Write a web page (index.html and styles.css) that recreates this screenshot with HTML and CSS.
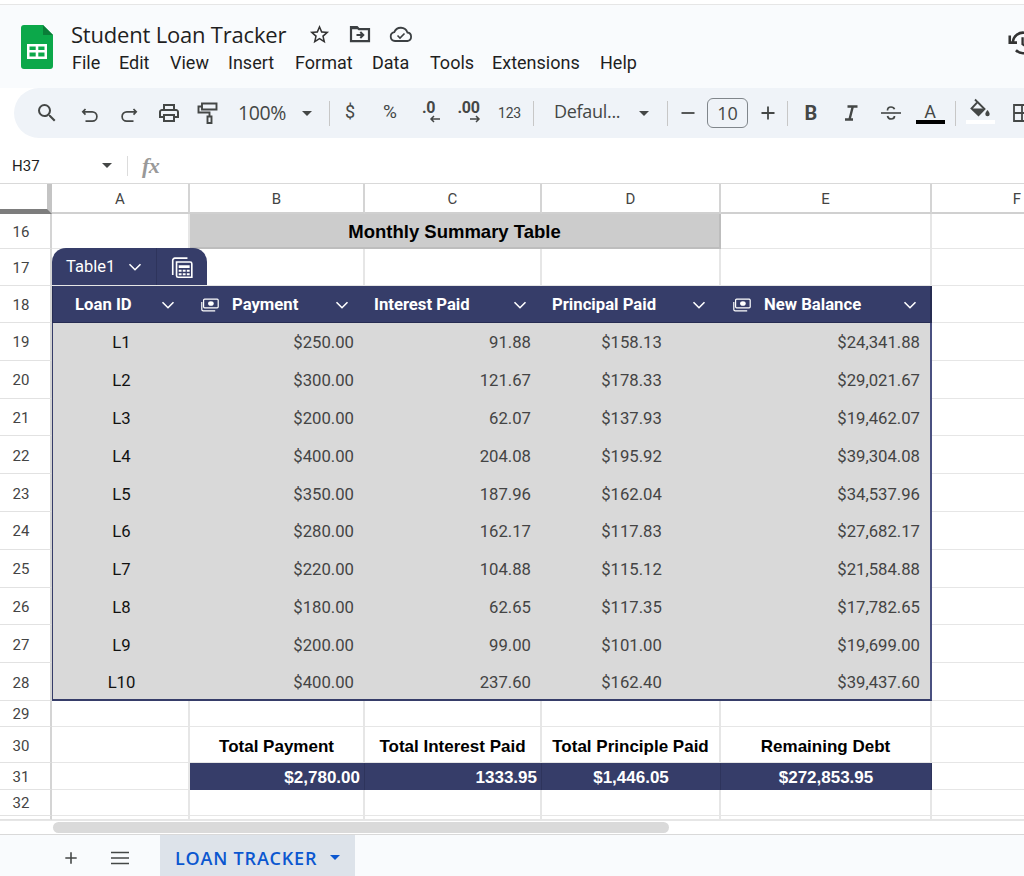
FILE: index.html
```html
<!DOCTYPE html>
<html lang="en">
<head>
<meta charset="utf-8">
<title>Student Loan Tracker</title>
<link rel="stylesheet" href="styles.css">
</head>
<body>
<svg class="defs" width="0" height="0" aria-hidden="true">
  <symbol id="chev" viewBox="0 0 14 14"><path d="M1.500 4.200 7 9.700l5.500-5.500" fill="none" stroke="currentColor" stroke-width="1.600"/></symbol>
  <symbol id="money" viewBox="0 0 18 14"><path d="M3.600 1.200h12.600a1 1 0 0 1 1 1v6.600a1 1 0 0 1-1 1H3.600a1 1 0 0 1-1-1V2.200a1 1 0 0 1 1-1zM.8 4v7.400a1.400 1.400 0 0 0 1.400 1.400h12" fill="none" stroke="currentColor" stroke-width="1.200"/><ellipse cx="9.900" cy="5.500" rx="2.800" ry="2.300" fill="currentColor"/></symbol>
</svg>
<div class="app">
  <header class="top">
    <svg class="logo" viewBox="0 0 32 44" aria-hidden="true"><path d="M3 0h19l10 10v31a3 3 0 0 1-3 3H3a3 3 0 0 1-3-3V3a3 3 0 0 1 3-3z" fill="#0ca84a"/><path d="M22 0l10 10h-10z" fill="#0a7d38"/><path d="M6 19h20v15H6zm2.500 2.500v3.500h6.200v-3.500zm8.800 0v3.500h6.200v-3.500zm-8.800 6v4h6.200v-4zm8.800 0v4h6.200v-4z" fill="#fff" fill-rule="evenodd"/></svg>
    <div class="titles">
      <div class="title-row">
        <span class="doc-title">Student Loan Tracker</span>
        <svg class="ic-star" viewBox="0 0 24 24" aria-hidden="true"><path d="M22 9.240l-7.190-.62L12 2 9.190 8.630 2 9.240l5.460 4.730L5.820 21 12 17.270 18.180 21l-1.630-7.030L22 9.240zM12 15.400l-3.760 2.270 1-4.280-3.320-2.880 4.380-.38L12 6.100l1.710 4.040 4.380.38-3.320 2.880 1 4.280L12 15.400z" fill="#333"/></svg>
        <svg class="ic-folder" viewBox="0 0 24 20" aria-hidden="true"><path d="M3 3h6l2 2.200h10v12H3z" fill="none" stroke="#3c4043" stroke-width="2.200"/><path d="M3 3h6l2 2.200H3z" fill="#3c4043"/><path d="M8.500 11h6.500M12.300 8l3 3-3 3" fill="none" stroke="#3c4043" stroke-width="2"/></svg>
        <svg class="ic-cloud" viewBox="0 0 24 16" aria-hidden="true"><path d="M6 15a4.500 4.500 0 0 1-.7-8.900A7 7 0 0 1 18.400 6.500 4.300 4.300 0 0 1 18.500 15z" fill="none" stroke="#3c4043" stroke-width="1.800"/><path d="M8.500 9.500l2.500 2.500 4.500-4.500" fill="none" stroke="#3c4043" stroke-width="1.600"/></svg>
      </div>
      <nav class="menu">
        <span class="m-file">File</span><span class="m-edit">Edit</span><span class="m-view">View</span><span class="m-insert">Insert</span><span class="m-format">Format</span><span class="m-data">Data</span><span class="m-tools">Tools</span><span class="m-ext">Extensions</span><span>Help</span>
      </nav>
    </div>
    <svg class="ic-history" viewBox="0 0 24 24" aria-hidden="true"><path d="M4.200 12a8.800 8.800 0 1 1 2.600 6.200M1.500 5.500v6.200h6.200" fill="none" stroke="#333" stroke-width="2.200"/><path d="M12.500 7v6l4 2.500" fill="none" stroke="#333" stroke-width="2"/></svg>
  </header>

  <div class="toolbar">
    <span class="tb w-search"><svg class="i24" viewBox="0 0 24 24" aria-hidden="true"><path d="M15.500 14h-.79l-.28-.27A6.471 6.471 0 0 0 16 9.500 6.500 6.500 0 1 0 9.500 16c1.610 0 3.090-.59 4.230-1.570l.27.280v.79l5 4.990L20.490 19l-4.990-5zm-6 0C7.010 14 5 11.990 5 9.500S7.010 5 9.500 5 14 7.010 14 9.500 11.990 14 9.500 14z" fill="#444746"/></svg></span>
    <span class="tb w-icon low"><svg class="i18" viewBox="0 0 18 18" aria-hidden="true"><path d="M4.500 3 1.800 5.800l2.700 2.800M2 5.800h9.200a4.300 4.300 0 0 1 0 9.400H4.500" fill="none" stroke="#444746" stroke-width="1.700"/></svg></span>
    <span class="tb w-icon low"><svg class="i18" viewBox="0 0 18 18" aria-hidden="true"><path d="M13.500 3l2.700 2.800-2.700 2.800M16 5.800H6.800a4.300 4.300 0 0 0 0 9.400h6.700" fill="none" stroke="#444746" stroke-width="1.700"/></svg></span>
    <span class="tb w-icon w-print"><svg class="i24" viewBox="0 0 24 24" aria-hidden="true"><path d="M19 8h-1V3H6v5H5c-1.660 0-3 1.340-3 3v6h4v4h12v-4h4v-6c0-1.660-1.340-3-3-3zM8 5h8v3H8V5zm8 12v2H8v-4h8v2zm2-2v-2H6v2H4v-4c0-.55.45-1 1-1h14c.55 0 1 .45 1 1v4h-2z" fill="#444746"/></svg></span>
    <span class="tb w-paint"><svg class="i24" viewBox="0 0 24 24" aria-hidden="true"><path d="M7 2.500h14.500v6H7zM7 5.500H3.500v6h11V15M12.500 15.500h4v6.500h-4z" fill="none" stroke="#444746" stroke-width="1.900"/></svg></span>
    <span class="tb-text zoom">100%</span>
    <span class="tb w-arrow"><i class="caret"></i></span>
    <i class="sep"></i>
    <span class="tb w-sym sym">$</span>
    <span class="tb w-sym sym sym-p">%</span>
    <span class="tb w-dec"><span class="dec"><b>.0</b><svg class="dec-arrow" viewBox="0 0 12 8" aria-hidden="true"><path d="M11 4H2M5 1 2 4l3 3" fill="none" stroke="#444746" stroke-width="1.500"/></svg></span></span>
    <span class="tb w-dec"><span class="dec"><b>.00</b><svg class="dec-arrow" viewBox="0 0 12 8" aria-hidden="true"><path d="M1 4h9M7 1l3 3-3 3" fill="none" stroke="#444746" stroke-width="1.500"/></svg></span></span>
    <span class="tb w-123 n123">123</span>
    <i class="sep"></i>
    <span class="tb-text font">Defaul...</span>
    <span class="tb w-arrow2"><i class="caret"></i></span>
    <i class="sep"></i>
    <span class="tb w-pm"><svg class="i16" viewBox="0 0 16 16" aria-hidden="true"><path d="M1.500 8h13" stroke="#444746" stroke-width="1.800"/></svg></span>
    <span class="size">10</span>
    <span class="tb w-pm"><svg class="i16" viewBox="0 0 16 16" aria-hidden="true"><path d="M1.500 8h13M8 1.500v13" stroke="#444746" stroke-width="1.800"/></svg></span>
    <i class="sep sep-fmt"></i>
    <span class="tb w-fmt fmt-b">B</span>
    <span class="tb w-fmt"><svg class="i18" viewBox="0 0 18 18" aria-hidden="true"><path d="M5.500 2.500h10M3 15.500h8M10.800 2.500 7.500 15.500" fill="none" stroke="#444746" stroke-width="2.400"/></svg></span>
    <span class="tb w-strike"><svg class="i22" viewBox="0 0 22 22" aria-hidden="true"><path d="M1 11h20" stroke="#444746" stroke-width="1.600"/><path d="M7.500 8.500C7.500 6 9.200 5 11 5s3 .8 3.500 2.300M7.500 14c.4 1.800 1.800 3 3.600 3s3.400-1 3.400-3" fill="none" stroke="#444746" stroke-width="1.700"/></svg></span>
    <span class="tb w-color"><span class="color-a">A</span><i class="bar black"></i></span>
    <i class="sep sep-last"></i>
    <span class="tb w-fill"><svg class="i24 fill-ic" viewBox="0 0 24 24" aria-hidden="true"><path d="M7 3.500l2.800 2.800M9.500 6 16.500 13l-6 6.200L3.500 12.500z" fill="none" stroke="#444746" stroke-width="1.900"/><path d="M3.500 12.500h13l-6 6.500z" fill="#444746"/><path d="M19.500 14s-2.200 2.500-2.200 4a2.200 2.200 0 0 0 4.400 0c0-1.500-2.200-4-2.200-4z" fill="#444746"/></svg><i class="bar white"></i></span>
    <span class="tb w-border"><svg class="i18" viewBox="0 0 18 18" aria-hidden="true"><path d="M1 1h16v16H1zM9 1v16M1 9h16" fill="none" stroke="#444746" stroke-width="1.800"/></svg></span>
  </div>

  <div class="fbar">
    <span class="cell-ref">H37</span>
    <i class="caret ref-caret"></i>
    <i class="fsep"></i>
    <span class="fx">fx</span>
  </div>

  <div class="sheet">
    <div class="corner"></div>
    <div class="ch">A</div><div class="ch">B</div><div class="ch">C</div><div class="ch">D</div><div class="ch">E</div><div class="ch ch-f">F</div>

    <div class="rh">16</div><div class="c"></div><div class="c merged">Monthly Summary Table</div><div class="c"></div><div class="c"></div>
    <div class="rh">17</div>
    <div class="c tab-host"><div class="table-tab"><span class="tab-name">Table1<svg class="chev" aria-hidden="true"><use href="#chev"/></svg></span><span class="tab-calc"><svg class="i24" viewBox="0 0 22 22" aria-hidden="true"><path d="M16 2H4.500A2 2 0 0 0 2.500 4v13.500M6 5.500h12.500a1.500 1.500 0 0 1 1.500 1.500v12.500H7.500A1.500 1.500 0 0 1 6 18z" fill="none" stroke="#fff" stroke-width="1.500"/><path d="M8 8.500h10v2.500H8zM8 12.500h2.600v2H8zM11.700 12.500h2.600v2h-2.600zM15.400 12.500H18v2h-2.600zM8 15.700h2.600v2H8zM11.700 15.700h2.600v2h-2.600zM15.400 15.700H18v2h-2.600z" fill="#fff"/></svg></span></div></div>
    <div class="c"></div><div class="c"></div><div class="c"></div><div class="c"></div><div class="c"></div>

    <div class="rh">18</div>
    <div class="th th-a"><span class="th-label">Loan ID</span><svg class="chev" aria-hidden="true"><use href="#chev"/></svg></div>
    <div class="th th-money"><svg class="money" aria-hidden="true"><use href="#money"/></svg><span>Payment</span><svg class="chev" aria-hidden="true"><use href="#chev"/></svg></div>
    <div class="th th-c"><span>Interest Paid</span><svg class="chev" aria-hidden="true"><use href="#chev"/></svg></div>
    <div class="th th-d"><span>Principal Paid</span><svg class="chev" aria-hidden="true"><use href="#chev"/></svg></div>
    <div class="th th-money th-e"><svg class="money" aria-hidden="true"><use href="#money"/></svg><span>New Balance</span><svg class="chev" aria-hidden="true"><use href="#chev"/></svg></div>
    <div class="c"></div>

    <div class="rh">19</div><div class="td id">L1</div><div class="td r">$250.00</div><div class="td r">91.88</div><div class="td m">$158.13</div><div class="td r e">$24,341.88</div><div class="c"></div>
    <div class="rh">20</div><div class="td id">L2</div><div class="td r">$300.00</div><div class="td r">121.67</div><div class="td m">$178.33</div><div class="td r e">$29,021.67</div><div class="c"></div>
    <div class="rh">21</div><div class="td id">L3</div><div class="td r">$200.00</div><div class="td r">62.07</div><div class="td m">$137.93</div><div class="td r e">$19,462.07</div><div class="c"></div>
    <div class="rh">22</div><div class="td id">L4</div><div class="td r">$400.00</div><div class="td r">204.08</div><div class="td m">$195.92</div><div class="td r e">$39,304.08</div><div class="c"></div>
    <div class="rh">23</div><div class="td id">L5</div><div class="td r">$350.00</div><div class="td r">187.96</div><div class="td m">$162.04</div><div class="td r e">$34,537.96</div><div class="c"></div>
    <div class="rh">24</div><div class="td id">L6</div><div class="td r">$280.00</div><div class="td r">162.17</div><div class="td m">$117.83</div><div class="td r e">$27,682.17</div><div class="c"></div>
    <div class="rh">25</div><div class="td id">L7</div><div class="td r">$220.00</div><div class="td r">104.88</div><div class="td m">$115.12</div><div class="td r e">$21,584.88</div><div class="c"></div>
    <div class="rh">26</div><div class="td id">L8</div><div class="td r">$180.00</div><div class="td r">62.65</div><div class="td m">$117.35</div><div class="td r e">$17,782.65</div><div class="c"></div>
    <div class="rh">27</div><div class="td id">L9</div><div class="td r">$200.00</div><div class="td r">99.00</div><div class="td m">$101.00</div><div class="td r e">$19,699.00</div><div class="c"></div>
    <div class="rh">28</div><div class="td id last">L10</div><div class="td r last">$400.00</div><div class="td r last">237.60</div><div class="td m last">$162.40</div><div class="td r e last">$39,437.60</div><div class="c"></div>

    <div class="rh">29</div><div class="c"></div><div class="c"></div><div class="c"></div><div class="c"></div><div class="c"></div><div class="c"></div>
    <div class="rh rh-30">30</div><div class="c"></div><div class="c lab">Total Payment</div><div class="c lab">Total Interest Paid</div><div class="c lab">Total Principle Paid</div><div class="c lab">Remaining Debt</div><div class="c"></div>
    <div class="rh">31</div><div class="c"></div><div class="tot tot-r">$2,780.00</div><div class="tot tot-r">1333.95</div><div class="tot">$1,446.05</div><div class="tot">$272,853.95</div><div class="c"></div>
    <div class="rh">32</div><div class="c"></div><div class="c"></div><div class="c"></div><div class="c"></div><div class="c"></div><div class="c"></div>
    <div class="rh"></div><div class="c"></div><div class="c"></div><div class="c"></div><div class="c"></div><div class="c"></div><div class="c"></div>
  </div>

  <div class="hscroll"><div class="thumb"></div></div>

  <footer class="tabs">
    <svg class="tab-plus" viewBox="0 0 16 16" aria-hidden="true"><path d="M1.500 8h13M8 1.500v13" stroke="#444746" stroke-width="1.800"/></svg>
    <svg class="tab-menu" viewBox="0 0 18 14" aria-hidden="true"><path d="M0 1.500h18M0 7h18M0 12.500h18" stroke="#444746" stroke-width="1.500"/></svg>
    <div class="sheet-tab">LOAN TRACKER<i class="caret tab-caret"></i></div>
  </footer>
</div>
</body>
</html>
```

FILE: styles.css
```css
* { box-sizing: border-box; }
html, body { margin: 0; padding: 0; }
body { width: 1024px; height: 876px; overflow: hidden; background: #fff; font-family: Roboto, sans-serif; color: #1f1f1f; }
.defs { position: absolute; }
.app { display: flex; flex-direction: column; width: 1024px; height: 876px; overflow: hidden; }

.top { display: flex; height: 84px; margin-top: 4px; padding: 20px 0 0 21px; border-top: 1px solid #e6e6e6; background: #f9fbfd; position: relative; flex: none; }
.logo { width: 32px; height: 44px; flex: none; }
.titles { margin-left: 18px; display: flex; flex-direction: column; }
.title-row { display: flex; align-items: center; height: 28px; margin-top: -5px; }
.doc-title { font-family: "Open Sans", sans-serif; font-size: 22px; width: 215px; white-space: nowrap; letter-spacing: -.2px; color: #1f1f1f; }
.ic-star { width: 23px; height: 23px; margin-left: 22px; }
.ic-folder { width: 24px; height: 20px; margin-left: 17px; }
.ic-cloud { width: 24px; height: 16px; margin-left: 17px; }
.menu { display: flex; margin-top: 3px; font-size: 18px; line-height: 24px; color: #1f1f1f; margin-left: 1px; }
.menu span { display: block; }
.m-file { width: 47px; } .m-edit { width: 51px; } .m-view { width: 58px; } .m-insert { width: 67px; } .m-format { width: 77px; } .m-data { width: 58px; } .m-tools { width: 62px; } .m-ext { width: 108px; }
.ic-history { position: absolute; left: 1008px; top: 24px; width: 28px; height: 28px; }

.toolbar { display: flex; align-items: center; flex: none; height: 50px; margin-left: 14px; padding-left: 22px; border-radius: 25px 0 0 25px; background: #eff3f8; color: #444746; white-space: nowrap; }
.tb { display: flex; align-items: center; justify-content: center; flex: none; height: 30px; }
.w-search { width: 22px; }
.w-icon { width: 39px; }
.w-icon.low svg { margin-top: 4px; }
.w-search + .w-icon { margin-left: 12px; }
.w-print { margin-left: 1px; }
.w-paint { width: 38px; margin-right: 12px; }
.i16 { width: 16px; height: 16px; } .i18 { width: 18px; height: 18px; } .i20 { width: 20px; height: 20px; } .i22 { width: 22px; height: 22px; } .i24 { width: 24px; height: 24px; flex: none; }
.tb-text { flex: none; }
.zoom { width: 47px; font-size: 19.500px; font-family: "Open Sans", sans-serif; letter-spacing: -.4px; margin-top: -2px; }
.w-arrow { width: 44px; }
.caret { display: block; width: 0; height: 0; border-left: 5.500px solid transparent; border-right: 5.500px solid transparent; border-top: 5.500px solid #444746; }
.sep { display: block; flex: none; width: 1px; height: 25px; background: #c7c7c7; }
.sep-fmt { margin-right: 3px; }
.w-sym { width: 40px; }
.sym { font-size: 18px; margin-top: -3px; }
.sym-p { font-size: 19px; }
.w-dec { width: 40px; }
.dec { display: flex; flex-direction: column; align-items: center; line-height: 14px; font-size: 16px; margin-top: -2px; margin-left: -3px; }
.dec b { font-weight: 700; letter-spacing: -.3px; line-height: 14px; }
.dec-arrow { width: 12px; height: 8px; margin: 0 0 0 13px; }
.w-123 { width: 39px; }
.n123 { font-size: 14px; letter-spacing: -.2px; margin-right: 4px; }
.font { margin-left: 20px; width: 68px; font-size: 18px; font-family: "Open Sans", sans-serif; letter-spacing: -.3px; margin-top: -5px; }
.w-arrow2 { width: 44px; margin-right: 1px; }
.w-pm { width: 39px; }
.size { flex: none; display: flex; align-items: center; justify-content: center; width: 41px; height: 30px; border: 1px solid #80868b; border-radius: 6px; font-size: 18px; font-family: "Open Sans", sans-serif; color: #444746; }
.w-fmt { width: 40px; }
.w-strike { width: 39px; }
.fmt-b { font-size: 20px; font-weight: 700; }
.w-color { width: 40px; flex-direction: column; justify-content: flex-start; }
.color-a { font-size: 18px; line-height: 20px; margin-top: 4px; }
.bar { display: block; flex: none; width: 29px; height: 4px; }
.bar.black { background: #000; margin-top: -2px; }
.bar.white { background: #fff; }
.w-fill { width: 48px; flex-direction: column; justify-content: flex-start; }
.fill-ic { margin-top: -2px; }
.w-border { width: 36px; }
.sep-last { margin-left: 5px; }

.fbar { display: flex; align-items: center; flex: none; height: 36px; background: #fff; border-bottom: 1px solid #d9d9d9; padding-left: 12px; margin-top: 10px; }
.cell-ref { width: 90px; font-size: 15px; color: #1f1f1f; }
.ref-caret { border-left-width: 5px; border-right-width: 5px; border-top-width: 5px; }
.fsep { display: block; width: 1px; height: 20px; margin-left: 15px; background: #dcdcdc; }
.fx { margin-left: 14px; font-family: "Liberation Serif", serif; font-style: italic; font-weight: 700; font-size: 22px; color: #999; letter-spacing: -.5px; }

.sheet { display: grid; flex: none; height: 636px; width: 1024px; overflow: hidden; grid-template-columns: 52px 138px 175px 177px 179px 211px 170px; grid-template-rows: 30px 35px 37px 37px repeat(10, 37.800px) 26px 36px 27px 26px 4px; font-size: 16px; }
.corner { background: #fff; border-right: 5px solid #c4c4c4; border-bottom: 5px solid #7d7d7d; }
.ch { display: flex; align-items: center; justify-content: center; font-size: 15px; color: #444; border-right: 2px solid #d4d4d4; border-bottom: 2px solid #d0d0d0; padding-top: 1px; }
.ch-f { border-right: 0; }
.rh { display: flex; align-items: center; justify-content: center; font-size: 15px; color: #444; border-right: 2px solid #d4d4d4; border-bottom: 1px solid #e2e2e2; padding: 2px 8px 0 0; }
.rh-30 { padding-top: 4px; }
.c { display: flex; align-items: center; border-right: 2px solid #e6e6e6; border-bottom: 1px solid #e6e6e6; min-width: 0; }
.merged { grid-column: span 3; justify-content: center; background: #ccc; border-right: 2px solid #bdbdbd; border-bottom: 2px solid #bdbdbd; font-family: "Liberation Sans", sans-serif; font-weight: 700; font-size: 18.500px; color: #000; padding-top: 2px; }
.tab-host { position: relative; }
.table-tab { position: absolute; left: 0; bottom: 0; top: -1px; width: 155px; display: flex; background: #363d69; color: #fff; border-radius: 14px 14px 0 0; }
.tab-name { display: flex; align-items: center; width: 105px; padding-left: 14px; font-size: 16.500px; border-right: 1px solid #2e345c; }
.tab-name .chev { margin-left: 13px; }
.tab-calc { display: flex; align-items: center; justify-content: center; flex: 1; padding-top: 2px; }
.chev { width: 14px; height: 14px; flex: none; }

.th { display: flex; align-items: center; background: #363d69; color: #fff; font-weight: 700; font-size: 16.700px; padding: 1px 15px 0 0; white-space: nowrap; border-bottom: 1px solid #262c52; }
.th .chev { margin-left: auto; }
.th-a { padding-left: 22px; border-left: 1px solid #262c52; }
.th-c { padding-left: 9px; }
.th-d { padding-left: 10px; }
.th-money { padding-left: 11px; padding-right: 16px; }
.th-e { padding-left: 12px; padding-right: 13px; border-right: 2px solid #262c52; }
.money { width: 18px; height: 14px; margin-right: 13px; flex: none; }
.td { display: flex; align-items: center; background: #d9d9d9; color: #444; font-size: 16.700px; white-space: nowrap; padding-top: 2px; }
.td.id { justify-content: center; color: #111; border-left: 1px solid #363d69; }
.td.r { justify-content: flex-end; padding-right: 11px; }
.td.m { justify-content: center; }
.td.e { padding-right: 10px; border-right: 2px solid #4a5080; }
.td.last { border-bottom: 2px solid #363d69; }
.lab { justify-content: center; font-family: "Liberation Sans", sans-serif; font-weight: 700; font-size: 17px; color: #000; white-space: nowrap; padding-top: 6px; }
.tot { display: flex; align-items: center; justify-content: center; background: #363d69; color: #fff; font-family: "Liberation Sans", sans-serif; font-weight: 700; font-size: 17px; border-right: 1px solid #2e345c; padding-top: 3px; }
.tot-r { justify-content: flex-end; padding-right: 4px; }

.hscroll { flex: none; height: 15px; padding: 1px 0 0 53px; background: #fff; border-top: 1px solid #e6e6e6; border-bottom: 1px solid #d9d9d9; }
.thumb { width: 616px; height: 11px; border-radius: 6px; background: #dadada; }

.tabs { flex: 1; display: flex; align-items: center; background: #f9fbfd; padding-left: 64px; }
.tab-plus { width: 14px; height: 14px; flex: none; margin-top: 4px; }
.tab-menu { width: 18px; height: 14px; margin: 4px 0 0 33px; flex: none; }
.sheet-tab { display: flex; align-items: center; height: 100%; width: 195px; margin-left: 31px; padding: 4px 0 0 15px; background: #dde3ea; color: #0b57d0; font-family: "Open Sans", sans-serif; font-weight: 600; font-size: 18px; letter-spacing: .8px; white-space: nowrap; }
.tab-caret { border-top-color: #0b57d0; border-left-width: 5px; border-right-width: 5px; border-top-width: 5px; margin-left: 13px; }
```
